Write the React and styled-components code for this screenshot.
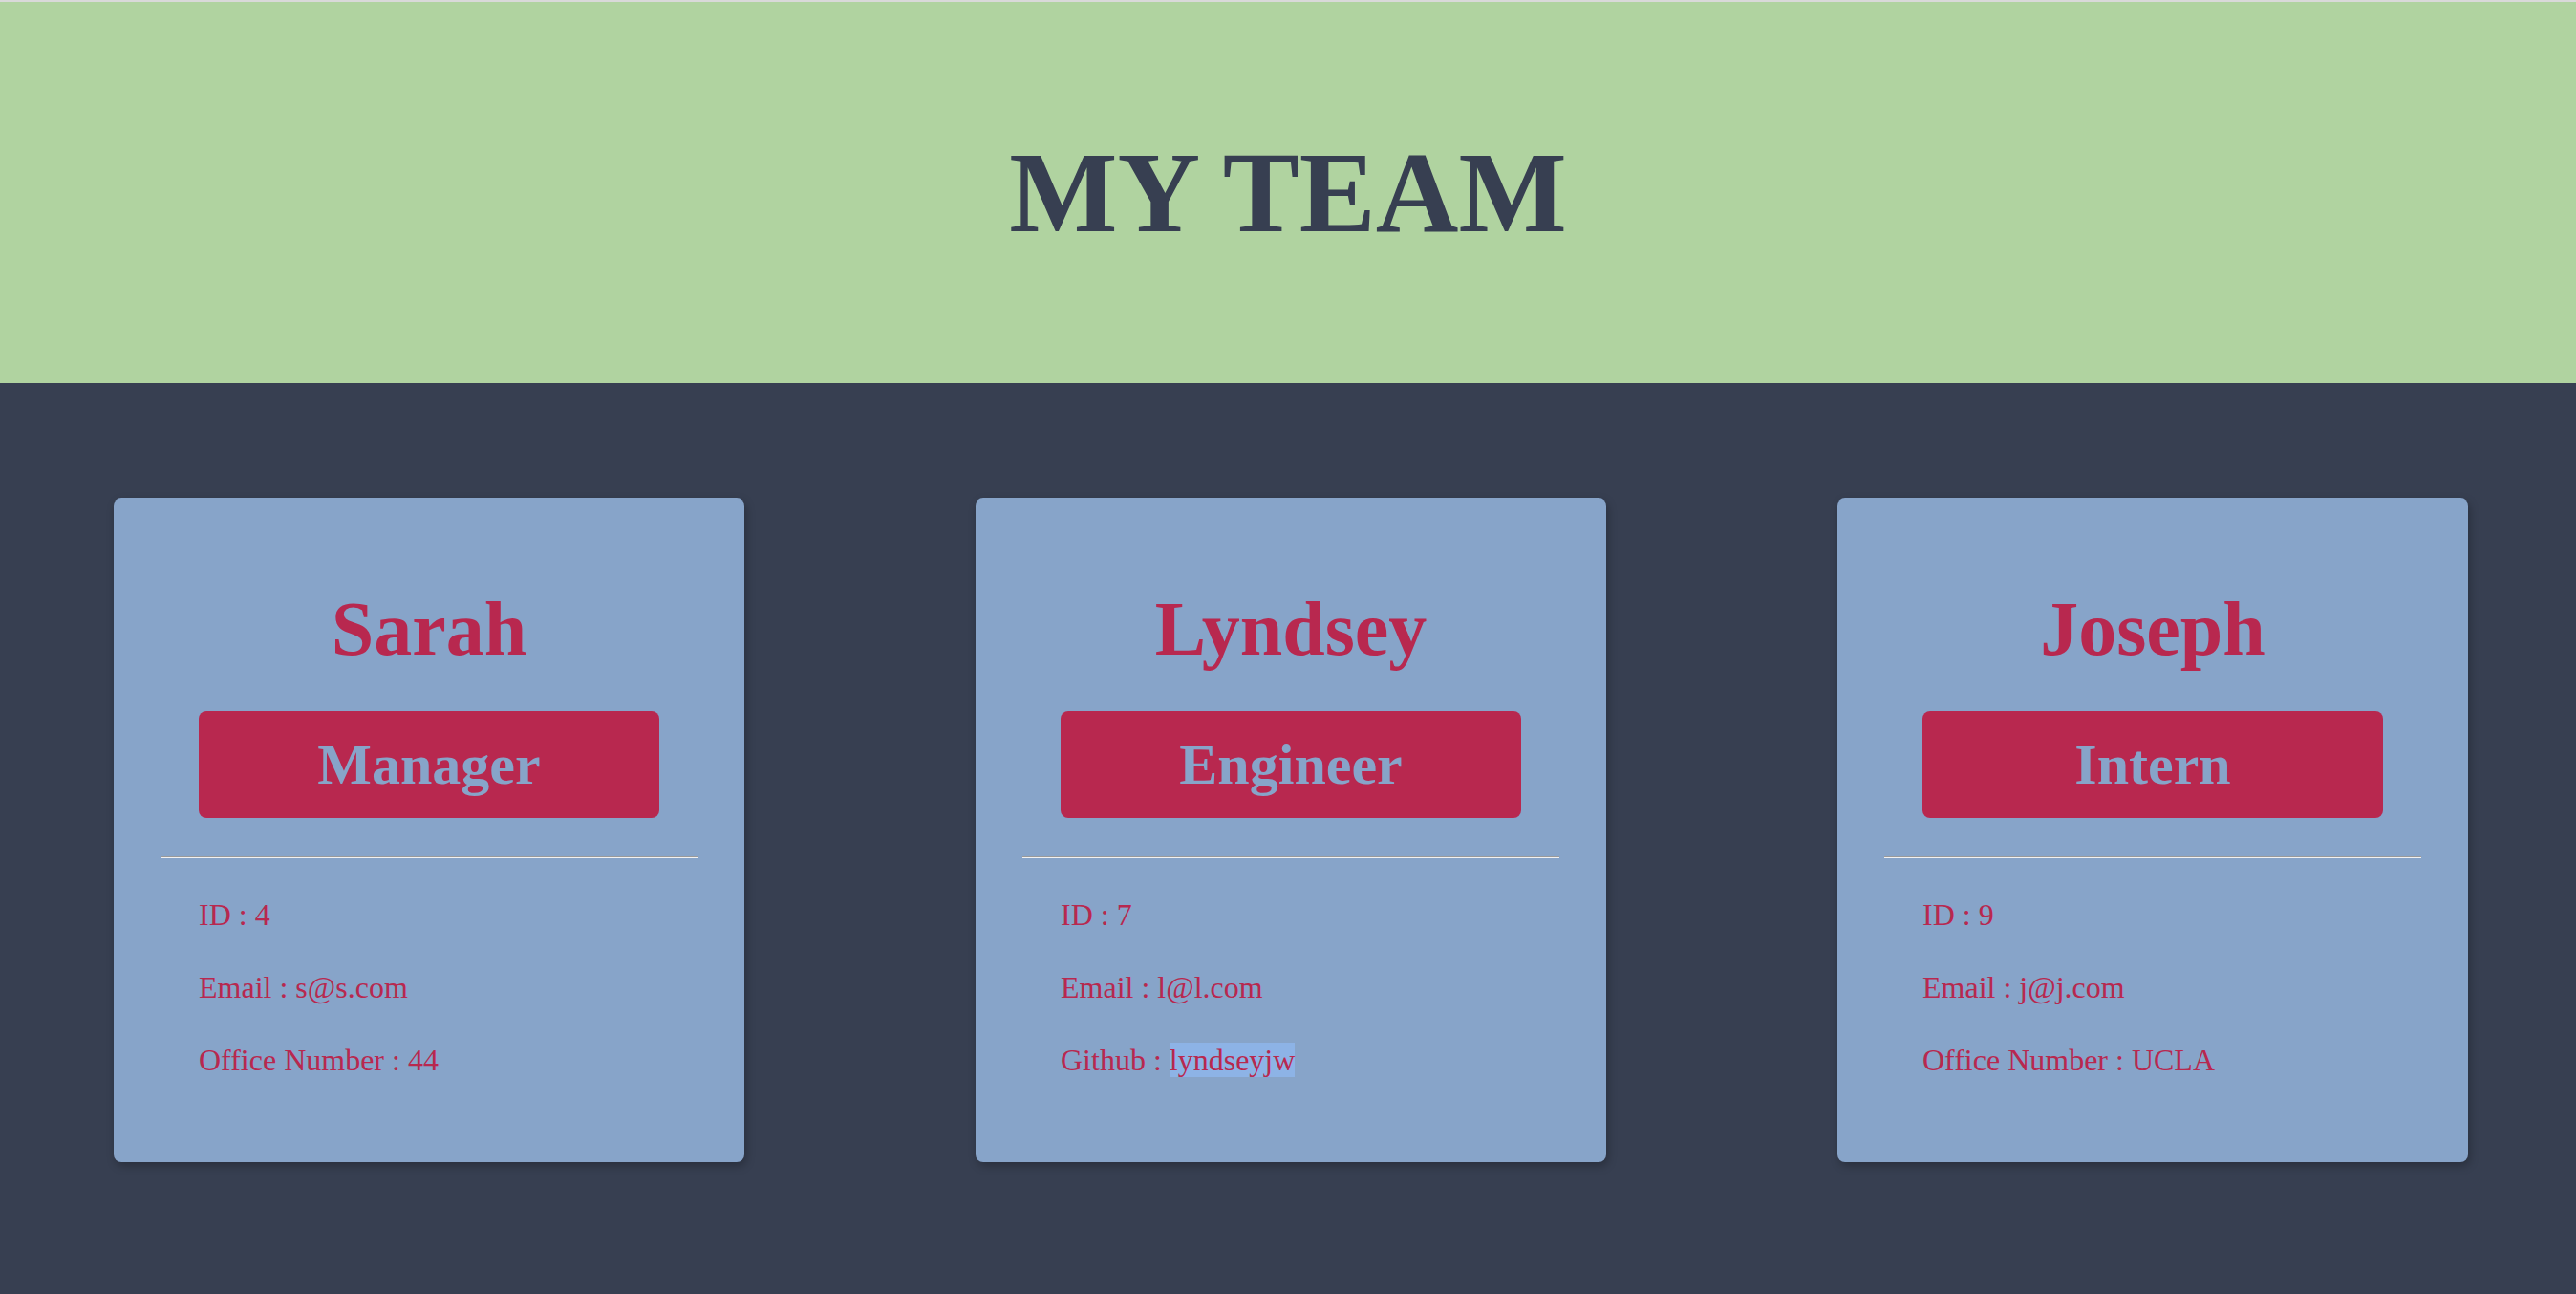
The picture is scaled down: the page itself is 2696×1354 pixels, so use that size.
import React from 'react'
import styled, { createGlobalStyle } from 'styled-components'

const GlobalStyle = createGlobalStyle`
  html, body {
    margin: 0;
    padding: 0;
    background: #373f51;
  }
  body {
    font-family: 'Liberation Serif', 'Times New Roman', serif;
  }
`

const Page = styled.div`
  min-height: 100vh;
  background: #373f51;
`

const Header = styled.header`
  height: 399px;
  border-top: 2px solid #d9d9d9;
  background: #b0d3a0;
  display: flex;
  align-items: center;
  justify-content: center;
`

const Title = styled.h1`
  margin: 0;
  font-size: 120px;
  font-weight: bold;
  color: #373f51;
  line-height: 1;
`

const Team = styled.main`
  display: flex;
  justify-content: space-between;
  padding: 120px 113px 0 119px;
`

const Card = styled.section`
  width: 660px;
  height: 695px;
  box-sizing: border-box;
  padding: 93px 49px 0 49px;
  background: #87a4c9;
  border-radius: 8px;
  box-shadow: 2px 4px 10px rgba(0, 0, 0, 0.25);
`

const Name = styled.h2`
  margin: 0;
  font-size: 80px;
  font-weight: bold;
  line-height: 88px;
  text-align: center;
  color: #b8284f;
`

const Role = styled.div`
  margin: 42px 40px 0;
  height: 112px;
  display: flex;
  align-items: center;
  justify-content: center;
  border-radius: 8px;
  background: #b8284f;
  color: #87a4c9;
  font-size: 60px;
  font-weight: bold;
`

const Divider = styled.hr`
  margin: 40px 0 0;
  border: 0;
  border-top: 1px solid #9a9a9a;
  border-bottom: 1px solid #f2f2f2;
`

const Info = styled.ul`
  list-style: none;
  margin: 41px 0 0;
  padding: 0 40px;
`

const Line = styled.li`
  font-size: 32px;
  line-height: 36px;
  color: #b8284f;
  & + & {
    margin-top: 40px;
  }
`

const Selected = styled.span`
  background: #8db3e6;
`

const team = [
  { name: 'Sarah', role: 'Manager', id: 4, email: 's@s.com', extra: 'Office Number', value: '44' },
  { name: 'Lyndsey', role: 'Engineer', id: 7, email: 'l@l.com', extra: 'Github', value: 'lyndseyjw', selected: true },
  { name: 'Joseph', role: 'Intern', id: 9, email: 'j@j.com', extra: 'Office Number', value: 'UCLA' }
]

export default function App() {
  return (
    <Page>
      <GlobalStyle />
      <Header>
        <Title>MY TEAM</Title>
      </Header>
      <Team>
        {team.map(member => (
          <Card key={member.id}>
            <Name>{member.name}</Name>
            <Role>{member.role}</Role>
            <Divider />
            <Info>
              <Line>ID : {member.id}</Line>
              <Line>Email : {member.email}</Line>
              <Line>
                {member.extra} :{' '}
                {member.selected ? <Selected>{member.value}</Selected> : member.value}
              </Line>
            </Info>
          </Card>
        ))}
      </Team>
    </Page>
  )
}
